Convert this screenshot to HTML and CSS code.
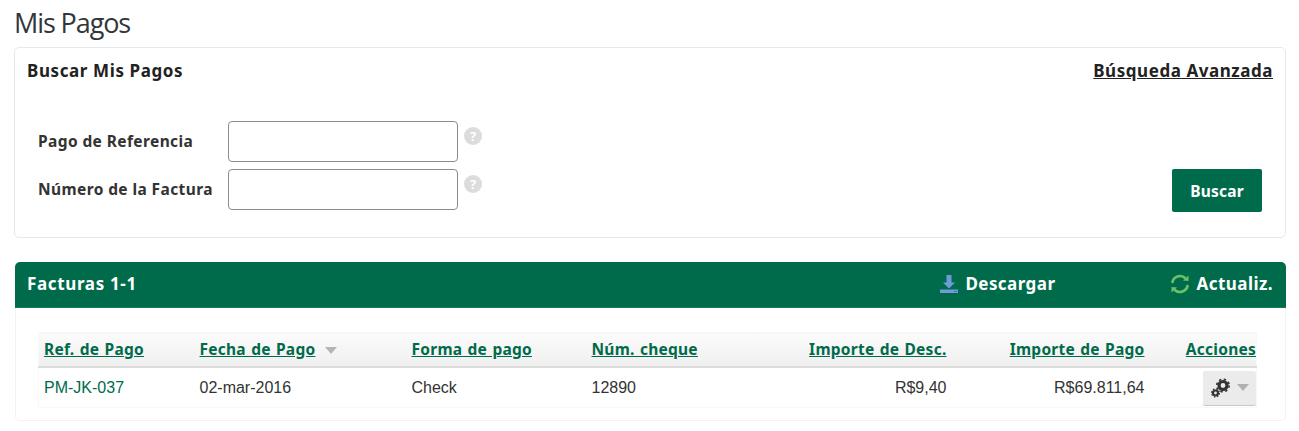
FILE: index.html
```html
<!DOCTYPE html>
<html lang="es">
<head>
<meta charset="utf-8">
<title>Mis Pagos</title>
<link rel="stylesheet" href="styles.css">
</head>
<body>
<h1 class="page-title">Mis Pagos</h1>
<section class="search-card">
  <div class="search-head">
    <h2 class="search-title">Buscar Mis Pagos</h2>
    <a class="advanced" href="#">Búsqueda Avanzada</a>
  </div>
  <div class="search-body">
    <div class="fields">
      <div class="field">
        <label class="field-label">Pago de Referencia</label>
        <input class="field-input" type="text">
        <span class="help">?</span>
      </div>
      <div class="field">
        <label class="field-label">Número de la Factura</label>
        <input class="field-input" type="text">
        <span class="help">?</span>
      </div>
    </div>
    <button class="search-btn">Buscar</button>
  </div>
</section>
<section class="results">
  <div class="results-head">
    <h2 class="results-title">Facturas 1-1</h2>
    <a class="tool tool-download" href="#">
      <svg class="tool-icon" width="20" height="20" viewBox="0 0 20 20"><path fill="#6f9bdc" d="M7.500 1h5v7.500h3.500L10 14.500 4 8.500h3.500z"/><path fill="#6f9bdc" d="M1 15.500h18V19H1z"/><path fill="#3f74b8" d="M15 17h3v1h-3z"/></svg>
      Descargar
    </a>
    <a class="tool tool-refresh" href="#">
      <svg class="tool-icon" width="20" height="20" viewBox="0 0 20 20" fill="none"><path stroke="#6cc267" stroke-width="2.600" d="M2.300 9A7.800 7.800 0 0 1 15.500 4.300M17.700 11A7.800 7.800 0 0 1 4.500 15.700"/><path fill="#6cc267" d="M13 6.500L18.500 7V1.500zM7 13.500L1.500 13v5.500z"/></svg>
      Actualiz.
    </a>
  </div>
  <div class="results-body">
    <table class="pay-table">
      <thead>
        <tr>
          <th class="col-ref"><a href="#">Ref. de Pago</a></th>
          <th class="col-date"><a href="#">Fecha de Pago</a><span class="sort-arrow"></span></th>
          <th class="col-form"><a href="#">Forma de pago</a></th>
          <th class="col-check"><a href="#">Núm. cheque</a></th>
          <th class="col-desc num"><a href="#">Importe de Desc.</a></th>
          <th class="col-pay num"><a href="#">Importe de Pago</a></th>
          <th class="col-act num"><a href="#">Acciones</a></th>
        </tr>
      </thead>
      <tbody>
        <tr>
          <td><a class="ref-link" href="#">PM-JK-037</a></td>
          <td>02-mar-2016</td>
          <td>Check</td>
          <td>12890</td>
          <td class="num">R$9,40</td>
          <td class="num">R$69.811,64</td>
          <td class="num cell-act">
            <button class="act-btn">
              <svg width="22" height="22" viewBox="0 0 22 22"><g fill="none" stroke="#333"><circle cx="13" cy="8.500" r="4" stroke-width="3.200"/><circle cx="13" cy="8.500" r="6.200" stroke-width="1.600" stroke-dasharray="2.400 2.470"/><circle cx="5.500" cy="16" r="2.500" stroke-width="2.200"/><circle cx="5.500" cy="16" r="4" stroke-width="1.200" stroke-dasharray="1.500 1.640"/></g></svg>
              <span class="act-arrow"></span>
            </button>
          </td>
        </tr>
      </tbody>
    </table>
  </div>
</section>
</body>
</html>
```

FILE: styles.css
```css
* { box-sizing: border-box; }
html, body { margin: 0; padding: 0; background: #fff; }
body {
  padding: 0 14px 0 14px;
  font-family: "Liberation Sans", Arial, sans-serif;
  color: #333;
  font-size: 14px;
}
.page-title {
  margin: 0;
  height: 47px;
  padding-top: 6px;
  font-family: "Open Sans", sans-serif;
  font-weight: 400;
  font-size: 27px;
  line-height: 34px;
  letter-spacing: -1.100px;
  color: #32363a;
}
.search-card {
  height: 191px;
  border: 1px solid #e8e8e8;
  border-radius: 5px;
  padding: 0 23px 0 12px;
  margin-right: -1px;
}
.search-head {
  display: flex;
  justify-content: space-between;
  align-items: center;
  height: 45px;
}
.search-title {
  margin: 0;
  font-family: "Noto Sans", sans-serif;
  font-weight: 700;
  font-size: 17px;
  letter-spacing: 0.600px;
  color: #222;
}
.advanced {
  margin-right: -11px;
  font-family: "Noto Sans", sans-serif;
  font-weight: 700;
  font-size: 17px;
  letter-spacing: 0.550px;
  color: #222;
}
.search-body {
  display: flex;
  justify-content: space-between;
  align-items: flex-end;
  padding: 28px 0 0 11px;
}
.fields { display: flex; flex-direction: column; gap: 7px; }
.field { display: flex; align-items: center; position: relative; height: 41px; }
.field-label {
  width: 190px;
  padding-bottom: 2px;
  font-family: "Noto Sans", sans-serif;
  font-weight: 700;
  font-size: 15.500px;
  letter-spacing: 0.400px;
  color: #333;
}
.field-input {
  width: 230px;
  height: 41px;
  border: 1px solid #8c8c8c;
  border-radius: 4px;
  background: #fff;
}
.help {
  width: 18px;
  height: 18px;
  margin: -12px 0 0 6px;
  border-radius: 50%;
  background: #dcdcdc;
  color: #fff;
  font-family: "Noto Sans", sans-serif;
  font-weight: 700;
  font-size: 13px;
  line-height: 18px;
  text-align: center;
}
.search-btn {
  width: 90px;
  height: 43px;
  margin-bottom: -2px;
  border: 0;
  border-radius: 2px;
  background: #006b4b;
  color: #fff;
  font-family: "Noto Sans", sans-serif;
  font-weight: 700;
  font-size: 15.500px;
  letter-spacing: 0.200px;
}
.results {
  margin: 24px -1px 0 1px;
  height: 159px;
  border: 1px solid #f2f2f2;
  border-top: 0;
  border-radius: 5px;
}
.results-head {
  display: flex;
  align-items: center;
  height: 46px;
  padding: 0 13px 2px 12px;
  margin: 0 -1px;
  background: #006b4b;
  border-bottom: 1px solid #0f7c5a;
  border-radius: 5px 5px 0 0;
}
.results-title {
  margin: 0;
  flex: 1;
  font-family: "Noto Sans", sans-serif;
  font-weight: 700;
  font-size: 17px;
  letter-spacing: 0.650px;
  color: #fff;
}
.tool {
  display: flex;
  align-items: center;
  gap: 6px;
  font-family: "Noto Sans", sans-serif;
  font-weight: 700;
  font-size: 17px;
  letter-spacing: 0.450px;
  color: #fff;
  text-decoration: none;
}
.tool-download { margin-right: 115px; }
.results-body { padding: 24px 28px 0 22px; }
.pay-table {
  width: 100%;
  border-collapse: collapse;
  table-layout: fixed;
  font-size: 16px;
  border: 1px solid #f8f8f8;
}
.pay-table th {
  height: 34px;
  padding: 0 1px 1px 5px;
  text-align: left;
  background: linear-gradient(#fbfbfb, #efefef);
  border-bottom: 2px solid #dcdcdc;
  font-family: "Noto Sans", sans-serif;
  font-weight: 700;
  font-size: 15.500px;
  letter-spacing: 0.250px;
  word-spacing: 1px;
  white-space: nowrap;
}
.pay-table th a { color: #006b4b; }
.pay-table td { height: 41px; padding: 2px 1px 0 5px; color: #333; }
.pay-table .num { text-align: right; }
.pay-table .col-act, .pay-table .cell-act { padding-right: 0; }
.col-ref { width: 156px; }
.col-date { width: 212px; }
.col-form { width: 180px; }
.col-check { width: 172px; }
.col-desc { width: 189px; }
.col-pay { width: 198px; }
.ref-link { color: #006b4b; text-decoration: none; }
.sort-arrow {
  display: inline-block;
  margin-left: 10px;
  vertical-align: 1px;
  border: 6px solid transparent;
  border-bottom: 0;
  border-top: 7px solid #b5b5b5;
}
.pay-table .cell-act { vertical-align: middle; padding-top: 0; }
.act-btn {
  display: inline-flex;
  align-items: center;
  justify-content: center;
  gap: 5px;
  width: 53px;
  height: 35px;
  margin-top: 2px;
  vertical-align: middle;
  border: 0;
  border-bottom: 1px solid #c8c8c8;
  border-radius: 2px;
  background: #ebebeb;
  padding: 0;
}
.act-arrow {
  border: 6px solid transparent;
  border-bottom: 0;
  border-top: 7px solid #b0b0b0;
}
```
